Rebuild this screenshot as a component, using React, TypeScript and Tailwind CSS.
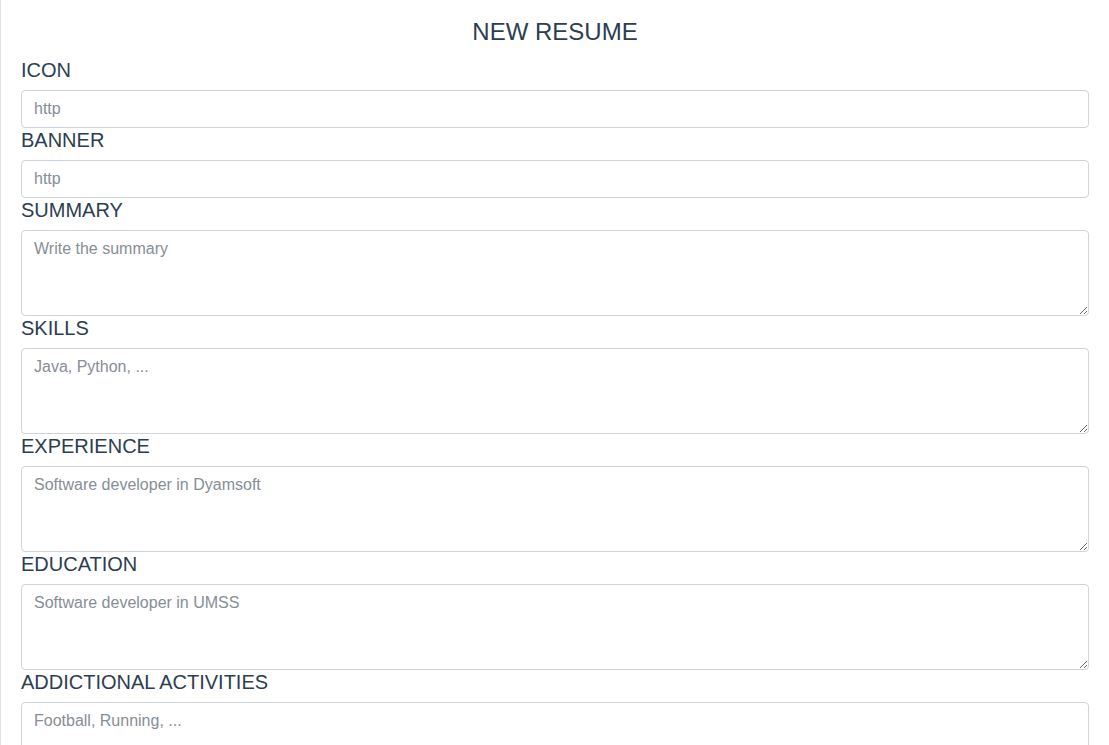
import * as React from "react";

const fields: { label: string; placeholder: string; multiline: boolean }[] = [
  { label: "ICON", placeholder: "http", multiline: false },
  { label: "BANNER", placeholder: "http", multiline: false },
  { label: "SUMMARY", placeholder: "Write the summary", multiline: true },
  { label: "SKILLS", placeholder: "Java, Python, ...", multiline: true },
  { label: "EXPERIENCE", placeholder: "Software developer in Dyamsoft", multiline: true },
  { label: "EDUCATION", placeholder: "Software developer in UMSS", multiline: true },
  { label: "ADDICTIONAL ACTIVITIES", placeholder: "Football, Running, ...", multiline: true },
];

const inputClass =
  "block w-full rounded-[4px] border border-[#ced4da] bg-white px-3 py-[6px] text-base leading-6 text-[#495057] placeholder:text-[#868e96] outline-none";

export default function App() {
  return (
    <div className="min-h-screen border-l border-[#dee2e6] bg-white px-5 pb-8 font-['Liberation_Sans',Arial,sans-serif] text-[#2c3e50]">
      <h3 className="mb-3 pt-[17px] text-center text-2xl leading-[29px] font-normal">NEW RESUME</h3>
      <form>
        {fields.map((field) => (
          <div key={field.label}>
            <label className="mb-2 block text-xl leading-6">{field.label}</label>
            {field.multiline ? (
              <textarea rows={3} placeholder={field.placeholder} className={inputClass + " resize-y"} />
            ) : (
              <input type="text" placeholder={field.placeholder} className={inputClass + " h-[38px]"} />
            )}
          </div>
        ))}
      </form>
    </div>
  );
}
